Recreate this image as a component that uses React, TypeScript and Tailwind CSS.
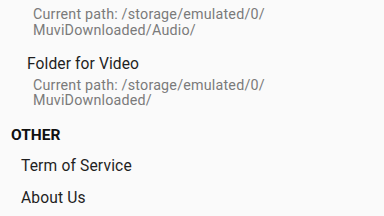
export default function App() {
    return (
        <div className="w-[384px] h-[216px] overflow-hidden bg-[#fafafa] font-['Roboto',sans-serif]">
            <div className="flex flex-col pt-[7px]">
                {/* Audio folder path (title scrolled off) */}
                <div className="pl-[33px] text-[14.3px] leading-[15.5px] tracking-[0.2px] text-[#7a7a7a]">
                    <p>Current path: /storage/emulated/0/</p>
                    <p>MuviDownloaded/Audio/</p>
                </div>

                {/* Video folder */}
                <div className="mt-[15.5px] flex flex-col gap-[4px]">
                    <p className="pl-[27px] text-[15.6px] leading-[20px] tracking-[0.1px] text-[#1f1f1f]">Folder for Video</p>
                    <div className="pl-[33px] text-[14.3px] leading-[15.5px] tracking-[0.2px] text-[#7a7a7a]">
                        <p>Current path: /storage/emulated/0/</p>
                        <p>MuviDownloaded/</p>
                    </div>
                </div>

                {/* Other section */}
                <h3 className="mt-[16px] pl-[11px] text-[15.5px] leading-[20px] font-bold text-[#111111]">OTHER</h3>
                <div className="mt-[11.5px] flex flex-col gap-[11.5px] pl-[21px] text-[15.6px] leading-[20px] tracking-[0.15px] text-[#1f1f1f]">
                    <p>Term of Service</p>
                    <p>About Us</p>
                </div>
            </div>
        </div>
    );
}
